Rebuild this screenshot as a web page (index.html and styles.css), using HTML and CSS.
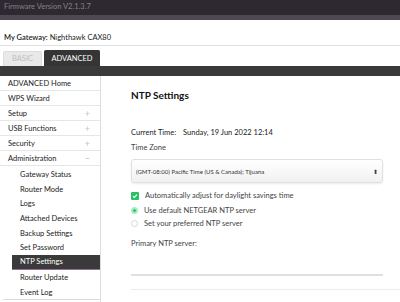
FILE: index.html
```html
<!DOCTYPE html>
<html>
<head>
    <title>NTP Settings</title>
    <link rel="stylesheet" href="styles.css">
</head>
<body>
    <div class="topbar">Firmware Version V2.1.3.7</div>
    <div class="strip"></div>
    <div class="gateway"><b>My Gateway:</b> Nighthawk CAX80</div>
    <div class="tabs">
        <div class="tab">BASIC</div>
        <div class="tab active">ADVANCED</div>
    </div>
    <div class="darkbar"></div>

    <div class="page">
        <div class="sidebar">
            <div class="nav-item">ADVANCED Home</div>
            <div class="nav-item">WPS Wizard</div>
            <div class="nav-item">Setup <span class="sign">+</span></div>
            <div class="nav-item">USB Functions <span class="sign">+</span></div>
            <div class="nav-item">Security <span class="sign">+</span></div>
            <div class="nav-item">Administration <span class="sign">&minus;</span></div>
            <div class="sub-list">
                <div class="sub-item">Gateway Status</div>
                <div class="sub-item">Router Mode</div>
                <div class="sub-item">Logs</div>
                <div class="sub-item">Attached Devices</div>
                <div class="sub-item">Backup Settings</div>
                <div class="sub-item">Set Password</div>
                <div class="sub-item selected">NTP Settings</div>
                <div class="sub-item">Router Update</div>
                <div class="sub-item">Event Log</div>
            </div>
        </div>

        <div class="main">
            <h1>NTP Settings</h1>
            <div class="current-time">
                <span class="label">Current Time:</span>
                <span>Sunday, 19 Jun 2022 12:14</span>
            </div>
            <div class="field-label">Time Zone</div>
            <div class="select-box">
                <span>(GMT-08:00) Pacific Time (US &amp; Canada); Tijuana</span>
                <span class="arrows">&#x2B0D;</span>
            </div>
            <div class="option">
                <span class="checkbox">
                    <svg width="6" height="6" viewBox="0 0 6 6"><path d="M1 3.2 L2.4 4.5 L5 1.6" fill="none" stroke="#fff" stroke-width="1.2"/></svg>
                </span>
                Automatically adjust for daylight savings time
            </div>
            <div class="option radio-row">
                <span class="radio on"></span>
                Use default NETGEAR NTP server
            </div>
            <div class="option radio-row second">
                <span class="radio"></span>
                Set your preferred NTP server
            </div>
            <div class="field-label primary">Primary NTP server:</div>
            <div class="input-line"></div>
            <div class="divider"></div>
        </div>
    </div>
</body>
</html>
```

FILE: styles.css
```css
body {
    margin: 0;
    font-family: Lato, "Open Sans", sans-serif;
    font-size: 7.5px;
    color: #333;
    background-color: #fff;
    overflow: hidden;
}

.topbar {
    height: 15px;
    line-height: 14px;
    padding-left: 4px;
    background-color: #2e2930;
    color: #858087;
    font-size: 7.5px;
}

.strip {
    height: 5px;
    background-color: #4e4950;
}

.gateway {
    height: 26px;
    line-height: 10px;
    padding: 13px 0 0 4px;
    box-sizing: border-box;
    border-bottom: 1px solid #e2e2e2;
    color: #222;
}

.gateway b {
    font-weight: 600;
}

.tabs {
    display: flex;
    gap: 2px;
    padding: 5px 0 0 3px;
    height: 20px;
    box-sizing: border-box;
    align-items: flex-end;
}

.tab {
    width: 37px;
    height: 14px;
    line-height: 14px;
    text-align: center;
    background-color: #e9e9e9;
    color: #bdbdbd;
    border: 1px solid #dcdcdc;
    border-bottom: none;
    border-radius: 2px 2px 0 0;
}

.tab.active {
    width: 54px;
    height: 15px;
    line-height: 15px;
    background-color: #353535;
    border-color: #353535;
    color: #fff;
}

.darkbar {
    height: 10px;
    background-color: #3a3a3a;
}

.page {
    display: flex;
}

.sidebar {
    width: 100px;
    border-right: 1px solid #dcdcdc;
    height: 240px;
}

.nav-item {
    height: 15px;
    line-height: 16px;
    padding: 0 10px 0 8px;
    box-sizing: border-box;
    border-bottom: 1px solid #e6e6e6;
    display: flex;
    justify-content: space-between;
    color: #222;
}

.sign {
    color: #c4c4c4;
    font-size: 9px;
}

.sub-list {
    margin-left: 3px;
    padding-top: 1px;
    border-bottom: 1px solid #dcdcdc;
}

.sub-item {
    height: 14.7px;
    line-height: 15.5px;
    padding-left: 17px;
    color: #222;
}

.sub-item.selected {
    margin-left: 9px;
    padding-left: 8px;
    background-color: #3a3a3a;
    color: #fff;
    border-bottom: 1px solid #9a6c9c;
    height: 13.7px;
    line-height: 14.5px;
}

.main {
    flex: 1;
    padding-left: 30px;
}

h1 {
    margin: 12px 0 0;
    font-size: 10px;
    font-weight: 700;
    color: #111;
    line-height: 14px;
}

.current-time {
    margin-top: 26px;
    line-height: 10px;
    color: #222;
}

.current-time .label {
    margin-right: 5px;
}

.field-label {
    margin-top: 5px;
    line-height: 10px;
    color: #444;
}

.select-box {
    margin-top: 6px;
    width: 252px;
    height: 24px;
    box-sizing: border-box;
    border: 1px solid #e0e0e0;
    border-radius: 3px;
    background: linear-gradient(#fff, #f1f1f1);
    box-shadow: 0 1px 2px rgba(0, 0, 0, 0.08);
    display: flex;
    justify-content: space-between;
    align-items: center;
    padding: 0 4px 0 4px;
    font-size: 6px;
    color: #333;
}

.arrows {
    font-size: 6px;
}

.option {
    display: flex;
    align-items: center;
    gap: 6px;
    margin-top: 8px;
    height: 9px;
    color: #444;
}

.checkbox {
    width: 8px;
    height: 8px;
    border-radius: 1px;
    background-color: #27c266;
    display: flex;
    align-items: center;
    justify-content: center;
}

.radio-row {
    margin-top: 6px;
}

.radio-row.second {
    margin-top: 4px;
}

.radio {
    width: 7px;
    height: 7px;
    border-radius: 50%;
    border: 1px solid #d6d6d6;
    box-sizing: border-box;
    margin-left: 0;
}

.radio.on {
    background-color: #2bc767;
    border: 2px solid #a9ecc3;
}

.option svg {
    display: block;
}

.primary {
    margin-top: 11px;
}

.input-line {
    margin-top: 25px;
    width: 252px;
    height: 2px;
    background-color: #e0e0e0;
}

.divider {
    margin-top: 13px;
    height: 1px;
    background-color: #ececec;
}
```
